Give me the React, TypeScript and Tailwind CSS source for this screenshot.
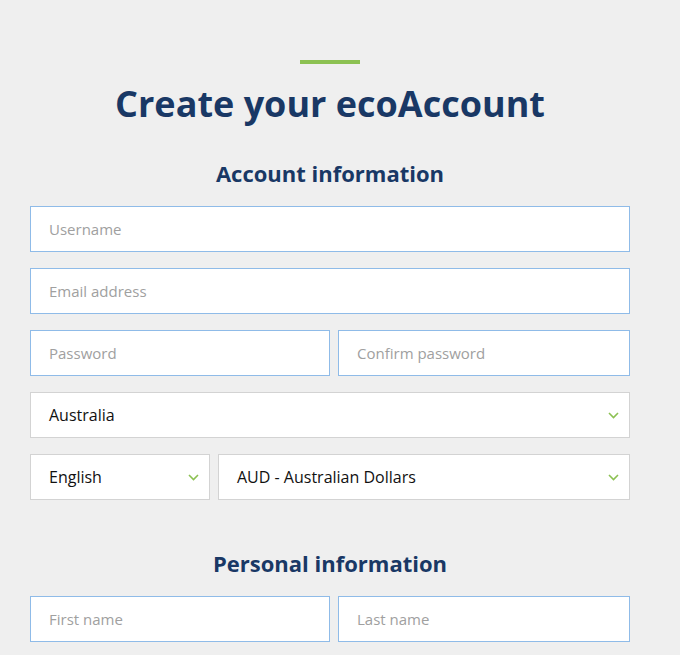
import { ReactNode } from "react";

const Chevron = () => (
  <svg width="11" height="7" viewBox="0 0 11 7" className="shrink-0">
    <path d="M1 1l4.5 4.5L10 1" fill="none" stroke="#8cc152" strokeWidth="1.6" />
  </svg>
);

const Field = ({ placeholder, className = "" }: { placeholder: string; className?: string }) => (
  <input
    placeholder={placeholder}
    className={`h-[46px] bg-white border border-[#8fbbe8] px-[18px] text-[15px] text-[#333] placeholder:text-[#a0a0a0] outline-none min-w-0 ${className}`}
  />
);

const Select = ({ children, className = "" }: { children: ReactNode; className?: string }) => (
  <div
    className={`h-[46px] bg-white border border-[#d3d3d3] pl-[18px] pr-[10px] flex items-center justify-between text-[16px] text-[#111] ${className}`}
  >
    <span>{children}</span>
    <Chevron />
  </div>
);

export default function App() {
  return (
    <div
      className="min-h-[655px] bg-[#efefef] pt-[60px] px-[30px] pb-8"
      style={{ fontFamily: '"Open Sans", sans-serif' }}
    >
      <div className="w-[600px] flex flex-col items-center">
        <div className="w-[60px] h-[4px] bg-[#8cc152]" />
        <h1 className="mt-[16px] text-[36px] leading-[48px] font-bold text-[#193865]">
          Create your ecoAccount
        </h1>
        <h2 className="mt-[30px] text-[22px] leading-[30px] font-bold text-[#193865]">
          Account information
        </h2>
      </div>

      <div className="w-[600px] mt-[18px] flex flex-col gap-[16px]">
        <Field placeholder="Username" />
        <Field placeholder="Email address" />
        <div className="flex gap-[8px]">
          <Field placeholder="Password" className="w-[300px]" />
          <Field placeholder="Confirm password" className="flex-1" />
        </div>
        <Select>Australia</Select>
        <div className="flex gap-[8px]">
          <Select className="w-[180px]">English</Select>
          <Select className="flex-1">AUD - Australian Dollars</Select>
        </div>
      </div>

      <div className="w-[600px] mt-[48px] flex justify-center">
        <h2 className="text-[22px] leading-[30px] font-bold text-[#193865]">Personal information</h2>
      </div>

      <div className="w-[600px] mt-[18px] flex gap-[8px]">
        <Field placeholder="First name" className="w-[300px]" />
        <Field placeholder="Last name" className="flex-1" />
      </div>
    </div>
  );
}
